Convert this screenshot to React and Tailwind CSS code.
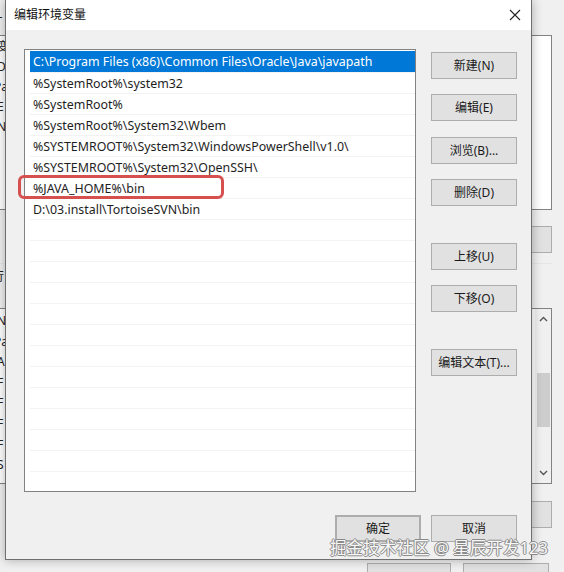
import React from 'react';

// Ventana "编辑环境变量" de Windows, con la ventana padre detrás
const FONT = "font-['Noto_Sans','Noto_Sans_CJK_SC',sans-serif]";

const paths = [
    'C:\\Program Files (x86)\\Common Files\\Oracle\\Java\\javapath',
    '%SystemRoot%\\system32',
    '%SystemRoot%',
    '%SystemRoot%\\System32\\Wbem',
    '%SYSTEMROOT%\\System32\\WindowsPowerShell\\v1.0\\',
    '%SYSTEMROOT%\\System32\\OpenSSH\\',
    '%JAVA_HOME%\\bin',
    'D:\\03.install\\TortoiseSVN\\bin',
];

// filas vacías para completar la lista
const rows = [...paths, ...Array(13).fill('')];

const WinButton = ({ children, className = '' }) => (
    <div className={`h-[27px] w-[86px] flex items-center justify-center bg-[#e1e1e1] border border-[#adadad] text-[12px] text-[#1a1a1a] ${className}`}>
        {children}
    </div>
);

// Restos de la ventana padre que asoman por los lados
const ParentWindow = () => (
    <div className="absolute inset-0 bg-[#f0f0f0] flex flex-col pr-[12px] text-[12px] text-[#222] [&>*]:shrink-0">
        <div className="h-[35px] flex items-start pt-[5px]">
            <span className="ml-[-4px]">L</span>
        </div>
        <div className="h-[175px] ml-[-4px] bg-white border border-[#828282] flex flex-col gap-[3px] pt-[2px] leading-[17px]">
            <span>变</span>
            <span>Di</span>
            <span className="ml-[-3px]">Pa</span>
            <span>E</span>
            <span>N</span>
        </div>
        <div className="h-[27px] mt-[16px] self-end w-[60px] bg-[#e1e1e1] border border-[#adadad]" />
        <div className="mt-[10px] h-[1px] bg-[#e6e6e6]" />
        <div className="h-[44px] pt-[4px]">
            <span className="ml-[-8px]">行</span>
        </div>
        <div className="h-[176px] ml-[-4px] bg-white border border-[#828282] flex">
            <div className="flex-1 flex flex-col leading-[20.6px] pt-[2px]">
                <span>Nz</span>
                <span className="ml-[-3px]">Pa</span>
                <span>A</span>
                <span>F</span>
                <span>F</span>
                <span>F</span>
                <span>F</span>
                <span>S</span>
            </div>
            <div className="w-[16px] flex flex-col items-center py-[4px] bg-[#f0f0f0]">
                <svg width="9" height="6" viewBox="0 0 9 6" className="mt-[3px] shrink-0">
                    <path d="M1 5 L4.5 1.5 L8 5" stroke="#555" strokeWidth="1.4" fill="none" />
                </svg>
                <div className="mt-[51px] w-[13px] h-[54px] bg-[#cdcdcd] shrink-0" />
                <div className="flex-1" />
                <svg width="9" height="6" viewBox="0 0 9 6" className="mb-[3px] shrink-0">
                    <path d="M1 1 L4.5 4.5 L8 1" stroke="#555" strokeWidth="1.4" fill="none" />
                </svg>
            </div>
        </div>
        <div className="h-[27px] mt-[17px] self-end w-[60px] bg-[#e1e1e1] border border-[#adadad]" />
        <div className="mt-[35px] flex gap-[12px] pl-[367px]">
            <div className="h-[20px] w-[84px] bg-[#e1e1e1] border border-[#adadad]" />
            <div className="h-[20px] w-[86px] bg-[#e1e1e1] border border-[#adadad]" />
        </div>
    </div>
);

const App = () => {
    return (
        <div className={`relative w-[564px] h-[572px] overflow-hidden ${FONT}`}>
            <ParentWindow />

            {/* Diálogo principal */}
            <div className="absolute left-[5px] top-0 w-[527px] h-[560px] flex flex-col bg-[#f0f0f0] border-x border-b border-[#6f6f6f] shadow-[0_0_10px_rgba(0,0,0,0.3)]">
                <div className="h-[30px] shrink-0 bg-white flex items-center justify-between pl-[8px] pr-[10px]">
                    <span className="text-[12px] text-[#111]">编辑环境变量</span>
                    <svg width="12" height="12" viewBox="0 0 12 12">
                        <path d="M1 1 L11 11 M11 1 L1 11" stroke="#222" strokeWidth="1.1" />
                    </svg>
                </div>

                <div className="flex pl-[18px] pt-[19px]">
                    {/* Lista de rutas */}
                    <div className="relative w-[392px] h-[443px] bg-white border border-[#828282]">
                        <div className="h-full overflow-hidden pl-[5px] pt-[1px]">
                            {rows.map((p, i) => (
                                <div
                                    key={i}
                                    className={`h-[21px] flex items-center pl-[3px] pt-[2px] text-[12.4px] leading-none whitespace-nowrap ${
                                        i === 0
                                            ? 'bg-[#0078d7] text-white'
                                            : 'text-[#1e1e1e] border-t border-[#f3f3f3]'
                                    }`}
                                >
                                    {p}
                                </div>
                            ))}
                        </div>
                        {/* Recuadro rojo de anotación */}
                        <div className="absolute left-[-7px] top-[125px] w-[206px] h-[24px] border-[3px] border-[#d65050] rounded-[6px]" />
                    </div>

                    {/* Botones laterales */}
                    <div className="flex flex-col ml-[15px] pt-[3px]">
                        <WinButton>新建(N)</WinButton>
                        <WinButton className="mt-[15px]">编辑(E)</WinButton>
                        <WinButton className="mt-[16px]">浏览(B)...</WinButton>
                        <WinButton className="mt-[15px]">删除(D)</WinButton>
                        <WinButton className="mt-[37px]">上移(U)</WinButton>
                        <WinButton className="mt-[15px]">下移(O)</WinButton>
                        <WinButton className="mt-[37px]">编辑文本(T)...</WinButton>
                    </div>
                </div>

                {/* Botones Aceptar / Cancelar */}
                <div className="flex justify-end gap-[10px] pr-[14px] mt-[23px]">
                    <WinButton className="border-2 border-[#3a92dc]">确定</WinButton>
                    <WinButton>取消</WinButton>
                </div>
            </div>

            {/* Marca de agua */}
            <div className="absolute left-[330px] top-[536px] text-[16.6px] text-[#f7f7f7] whitespace-nowrap [text-shadow:-1px_0_#8a8a8a,1px_0_#8a8a8a,0_1px_#8a8a8a,0_-1px_#8a8a8a]">
                掘金技术社区 @ 星辰开发123
            </div>
        </div>
    );
};

export default App;
